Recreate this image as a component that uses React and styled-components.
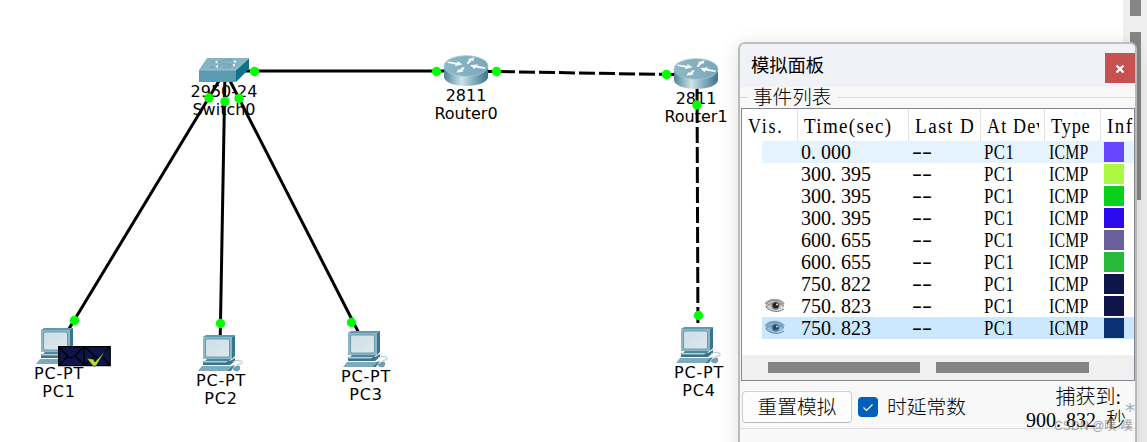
import React from "react";
import styled, { createGlobalStyle, css } from "styled-components";

const GlobalStyle = createGlobalStyle`
  body {
    margin: 0;
    background: #fff;
    overflow: hidden;
  }
  * {
    box-sizing: border-box;
  }
`;

const songti = `"Liberation Serif", "Noto Sans CJK SC", serif`;

const Workspace = styled.main`
  position: relative;
  display: flex;
  justify-content: flex-end;
  width: 1147px;
  height: 442px;
  overflow: hidden;
  background: #fff;
`;

const Track = styled.div`
  display: flex;
  flex-direction: column;
  align-items: center;
  gap: 16px;
  width: 24px;
  background: #efefef;
`;

const Thumb = styled.div`
  width: 11px;
  height: ${(p) => p.$size}px;
  background: #858585;
`;

const Links = styled.svg`
  position: absolute;
  inset: 0;
`;

// devices are placed freely on the topology canvas
const Node = styled.div`
  position: absolute;
  left: ${(p) => p.$x}px;
  top: ${(p) => p.$y}px;
  width: 90px;
  display: flex;
  flex-direction: column;
  align-items: center;
`;

const Label = styled.span`
  font: 16px/18px "DejaVu Sans", sans-serif;
  letter-spacing: ${(p) => p.$track || 0}px;
  color: #000;
  white-space: nowrap;
  text-align: center;
`;

const Packets = styled.svg`
  position: absolute;
  left: 58px;
  top: 345px;
`;

const Panel = styled.section`
  position: absolute;
  left: 738px;
  top: 42px;
  width: 399px;
  height: 420px;
  border: 2px solid #b9babc;
  border-top-color: #c0c0c1;
  border-radius: 7px 7px 0 0;
  background: #f8f8f8;
  box-shadow: 0 3px 20px rgba(0, 0, 0, 0.13);
`;

const TitleBar = styled.header`
  display: flex;
  justify-content: space-between;
  height: 43px;
  padding: 9px 0 0 11px;
  border-radius: 5px 5px 0 0;
  background: #f0f2f8;
`;

const Title = styled.h1`
  margin: -2px 0 0;
  font: 400 18.3px/26px "Noto Sans CJK SC", sans-serif;
  color: #000;
`;

const CloseButton = styled.button`
  display: flex;
  align-items: center;
  justify-content: center;
  width: 30px;
  height: 30px;
  padding: 1px 0 0;
  border: 0;
  background: #c75050;
`;

const Legend = styled.div`
  display: flex;
  align-items: center;
  height: 21px;
  font: 300 19.6px/21px ${songti};
  color: #000;

  &::before,
  &::after {
    content: "";
    height: 1px;
    background: #dcdcdc;
  }
  &::before {
    width: 8px;
    margin-right: 5px;
  }
  &::after {
    flex: 1;
    margin-left: 6px;
  }
`;

const EventTable = styled.div`
  width: 394px;
  height: 273px;
  margin-left: 1px;
  border: 1px solid #828790;
  background: #fff;
  overflow: hidden;
`;

const columns = css`
  display: grid;
  grid-template-columns: 56px 111px 72px 64px 56px 33px;
`;

const HeadRow = styled.div`
  ${columns}
  height: 32px;
`;

const HeadCell = styled.div`
  padding: 5px 5px 0 6px;
  border-right: 1px solid #e2e2e2;
  &:last-child {
    border-right: 0;
    padding-right: 0;
  }
`;

const Clip = styled.div`
  overflow: hidden;
  height: 25px;
`;

const Mono = styled.span`
  display: inline-block;
  font: 20px/24px ${songti};
  letter-spacing: ${(p) => p.$track || 0}px;
  transform: scaleX(${(p) => p.$squeeze || 1});
  transform-origin: left center;
  white-space: pre;
  color: #000;
`;

const Point = styled.span`
  letter-spacing: 5px;
`;

const Dashes = styled(Mono)`
  margin-top: -3px;
`;

const Row = styled.div`
  ${columns}
  height: 22px;
  background: linear-gradient(${(p) => p.$bg}, ${(p) => p.$bg}) 20px 0 no-repeat;
`;

const Cell = styled.div`
  height: 22px;
  padding-left: ${(p) => p.$pad || 3}px;
  display: flex;
  align-items: center;
`;

const EyeCell = styled(Cell)`
  padding-left: 22px;
`;

const Swatch = styled.div`
  width: 20px;
  height: 20px;
  background: ${(p) => p.$color};
`;

const HScroll = styled.div`
  display: flex;
  gap: 16px;
  height: 25px;
  margin-top: 16px;
  padding: 7px 0 0 26px;
  background: #f0f0f0;
`;

const HThumb = styled.div`
  width: ${(p) => p.$w}px;
  height: 11px;
  background: #858585;
`;

const Controls = styled.div`
  display: flex;
  align-items: flex-start;
  height: 48px;
  border-bottom: 1px solid #dcdcdc;
  padding: 10px 9px 0 2px;
`;

const ResetButton = styled.button`
  width: 110px;
  height: 32px;
  padding: 0;
  border: 1px solid #cfcfcf;
  border-bottom-color: #bcbcbc;
  border-radius: 4px;
  background: #fdfdfd;
  font: 300 19.8px/28px ${songti};
  color: #000;
`;

const Check = styled.div`
  display: flex;
  align-items: center;
  justify-content: center;
  width: 20px;
  height: 20px;
  margin: 6px 9px 0 6px;
  border-radius: 4px;
  background: #005fb8;
`;

const CheckLabel = styled.span`
  font: 300 19.8px/32px ${songti};
  color: #000;
`;

const Captured = styled.div`
  flex: 1;
  margin-top: -5px;
  font: 300 20px/23px ${songti};
  text-align: right;
  color: #000;
  white-space: pre;
`;

const Star = styled.span`
  position: absolute;
  left: 1125px;
  top: 398px;
  font: 20px/24px "DejaVu Sans", sans-serif;
  color: #a5aab2;
`;

const Watermark = styled.span`
  position: absolute;
  left: 1054px;
  top: 417px;
  font: 12.2px/18px "Liberation Sans", "Noto Sans CJK SC", sans-serif;
  color: rgba(110, 110, 110, 0.65);
  white-space: nowrap;
`;

const Defs = () => (
  <svg width="0" height="0" style={{ position: "absolute" }}>
    <defs>
      <linearGradient id="side" x1="0" x2="1" y1="0" y2="0">
        <stop offset="0" stopColor="#4f8499" />
        <stop offset="0.4" stopColor="#cfe3ea" />
        <stop offset="0.65" stopColor="#8ab3c2" />
        <stop offset="1" stopColor="#3d7389" />
      </linearGradient>
      <linearGradient id="top" x1="0" x2="1" y1="0" y2="0">
        <stop offset="0" stopColor="#8fb9c8" />
        <stop offset="1" stopColor="#79a7b9" />
      </linearGradient>
      <linearGradient id="screen" x1="0" x2="1" y1="0" y2="1">
        <stop offset="0" stopColor="#cddfe6" />
        <stop offset="1" stopColor="#dde8ed" />
      </linearGradient>
    </defs>
  </svg>
);

const RouterIcon = () => (
  <svg width="46" height="32" viewBox="0 0 46 32">
    <path d="M1 11v11c0 5 10 9 22 9s22-4 22-9V11z" fill="url(#side)" />
    <ellipse cx="23" cy="11" rx="22" ry="10.3" fill="url(#top)" stroke="#a7c8d4" strokeWidth="0.8" />
    <g fill="#f7fcfe" stroke="#5e8fa2" strokeWidth="0.3">
      <path d="M4.5 6.2l9.5 1.4.6-1.8 5.4 3.8-8.5 2 .8-1.9-8.8-1.6z" />
      <path d="M42 14.3l-9.5-1.5-.9 1.6-5-4.4 9-.9-1.2 1.5 8.6 1.7z" />
      <path d="M23.2 8.7l2.6-4-1.8-.6 8-2-1.7 4.3-1.5-.7-3.2 3.6z" />
      <path d="M22 12.3l-2.3 3.7 1.8.7-8.5 1.3 2.2-4.1 1.6.7 3-2.8z" />
    </g>
  </svg>
);

const SwitchIcon = () => (
  <svg width="52" height="26" viewBox="0 0 52 26">
    <path d="M1 13L9 1h42L38 13z" fill="#86b4c4" />
    <path d="M1 13h37v12H1z" fill="#5b9bb1" />
    <path d="M38 13L51 1v11L38 25z" fill="#0e7289" />
    <path d="M1 13h37L51 1" fill="none" stroke="#a5c9d5" strokeWidth="0.8" />
    <path
      d="M14 5h9l3-2h8M30 8h8M11 10h9l4-3h8M25 10h8"
      fill="none"
      stroke="#6a9fb3"
      strokeWidth="1"
    />
    <path
      d="M16.5 5l3-1.5v3zM35 4.500l3-1.500v3zM17 9.500l3-1.500v3zM34 8l3-1.500v3z"
      fill="#f3fafc"
    />
  </svg>
);

const PcIcon = () => (
  <svg width="46" height="38" viewBox="0 0 46 38">
    <path d="M5 3L8 1h29l-3 2z" fill="#5e9bb0" />
    <path d="M34 3l3-2v21l-3 3z" fill="#33788f" />
    <rect x="5" y="3" width="29" height="22" fill="#8db7c6" />
    <rect x="7.5" y="5" width="24" height="18" rx="2" fill="url(#screen)" stroke="#578ea3" strokeWidth="0.8" />
    <path d="M9 25h24l-3 4H5z" fill="#4e879d" />
    <path d="M5 27h27l5-3v3l-5 4H5z" fill="#38748b" />
    <path d="M6 27h24l-2 1.5H5z" fill="#b0ced8" />
    <path d="M4 32h30l-5 5H0z" fill="#7dabbc" />
    <path d="M34 32l3-1-4 6h-4z" fill="#427e94" />
    <path d="M35 28c5-3 10-1 9 1s-5 0-4 3" fill="none" stroke="#b9d0d8" strokeWidth="1.2" />
    <path d="M38 32c3-1 5 0 4 3s-4 2.5-6 1.5-1-2.5 2-4.5z" fill="#6b9fb2" />
  </svg>
);

const EyeIcon = ({ blue }) => {
  const dark = blue ? "#24506f" : "#222";
  const mid = blue ? "#5e8cab" : "#777";
  return (
    <svg width="22" height="16" viewBox="0 0 22 16">
      <path d="M1 8C4 2 8 1 12 2s7 3 8 7c-4 5-14 6-19-1z" fill={blue ? "#94bdd8" : "#cfcfcf"} />
      <path d="M1.5 6C6 1 14 0 20 6" fill="none" stroke={mid} strokeWidth="2.4" opacity="0.7" />
      <path d="M2 9c3-4 12-6 18-1M2 9c5 5 12 6 18 2" fill="none" stroke={mid} strokeWidth="1" />
      <circle cx="11.5" cy="7.6" r="4.2" fill={mid} />
      <circle cx="11.7" cy="7.4" r="2.9" fill={dark} />
      <circle cx="13" cy="6.5" r="0.9" fill={blue ? "#c5e0f0" : "#fff"} />
    </svg>
  );
};

const nodes = [
  { x: 179, y: 57, icon: SwitchIcon, lines: ["2950-24", "Switch0"] },
  { x: 421, y: 55, icon: RouterIcon, lines: ["2811", "Router0"] },
  { x: 651, y: 58, icon: RouterIcon, lines: ["2811", "Router1"] },
  { x: 14, y: 327, icon: PcIcon, lines: ["PC-PT", "PC1"], track: 0.8 },
  { x: 176, y: 334, icon: PcIcon, lines: ["PC-PT", "PC2"], track: 0.8 },
  { x: 321, y: 330, icon: PcIcon, lines: ["PC-PT", "PC3"], track: 0.8 },
  { x: 654, y: 326, icon: PcIcon, lines: ["PC-PT", "PC4"], track: 0.8 },
];

const ports = [
  [254.5, 71.5], [436.5, 71.5], [496.5, 71.5], [666.5, 74.5],
  [697, 105], [698.5, 315.5], [209, 98], [225, 101.5], [239, 98.5],
  [74.5, 320.5], [220.5, 323.5], [351.5, 322.5],
];

const headers = [
  { text: "Vis.", squeeze: 0.9, track: 2 },
  { text: "Time(sec)", squeeze: 0.95, track: 1.4 },
  { text: "Last D", squeeze: 0.96, track: 1.5 },
  { text: "At Dev", squeeze: 0.9, track: 1.3 },
  { text: "Type", squeeze: 0.92, track: 0.8 },
  { text: "Inf", squeeze: 0.95, track: 1.6 },
];

const events = [
  { time: "0.000", color: "#6647ff", bg: "#e5f3ff" },
  { time: "300.395", color: "#adf941" },
  { time: "300.395", color: "#09d11b" },
  { time: "300.395", color: "#2c09eb" },
  { time: "600.655", color: "#6a609b" },
  { time: "600.655", color: "#2ab93b" },
  { time: "750.822", color: "#0f1449" },
  { time: "750.823", color: "#0f1449", eye: true },
  { time: "750.823", color: "#0a3273", eye: true, bg: "#cce8ff" },
];

const Seconds = ({ value }) => {
  const [whole, frac] = value.split(".");
  return (
    <Mono>
      {whole}
      <Point>.</Point>
      {frac}
    </Mono>
  );
};

const SimulationPanel = () => (
  <Panel>
    <TitleBar>
      <Title>模拟面板</Title>
      <CloseButton aria-label="Close">
        <svg width="10" height="8" viewBox="0 0 10 8">
          <path d="M1.5 .5l7 7M8.5 .5l-7 7" stroke="#fff" strokeWidth="2.2" />
        </svg>
      </CloseButton>
    </TitleBar>
    <Legend>事件列表</Legend>
    <EventTable>
      <HeadRow>
        {headers.map((h) => (
          <HeadCell key={h.text}>
            <Clip>
              <Mono $squeeze={h.squeeze} $track={h.track}>{h.text}</Mono>
            </Clip>
          </HeadCell>
        ))}
      </HeadRow>
      {events.map((e, i) => (
        <Row key={i} $bg={e.bg || "transparent"}>
          <EyeCell>{e.eye && <EyeIcon blue={!!e.bg} />}</EyeCell>
          <Cell>
            <Seconds value={e.time} />
          </Cell>
          <Cell>
            <Dashes $squeeze={1.5}>--</Dashes>
          </Cell>
          <Cell>
            <Mono $squeeze={0.84} $track={0.6}>PC1</Mono>
          </Cell>
          <Cell $pad={4}>
            <Mono $squeeze={0.79} $track={0.3}>ICMP</Mono>
          </Cell>
          <Cell>
            <Swatch $color={e.color} />
          </Cell>
        </Row>
      ))}
      <HScroll>
        <HThumb $w={152} />
        <HThumb $w={153} />
      </HScroll>
    </EventTable>
    <Controls>
      <ResetButton>重置模拟</ResetButton>
      <Check>
        <svg width="12" height="9" viewBox="0 0 12 9">
          <path d="M1.5 4.5l3 3 6-6" fill="none" stroke="#fff" strokeWidth="1.1" />
        </svg>
      </Check>
      <CheckLabel>时延常数</CheckLabel>
      <Captured>
        <div>
          捕获到<Point>:</Point>
        </div>
        <div>
          900<Point>.</Point>832<Point> </Point>秒
        </div>
      </Captured>
    </Controls>
  </Panel>
);

const App = () => (
  <>
    <GlobalStyle />
    <Defs />
    <Workspace>
      <Track>
        <Thumb $size={16} />
        <Thumb $size={168} />
      </Track>
      <Links width="740" height="442">
        <g stroke="#000" strokeWidth="3" fill="none">
          <path d="M225 71H467M225 71L58 347M225 71L220 350M225 71L366 347" />
          <path d="M467 71L697 75" strokeDasharray="16 4" strokeDashoffset="8" />
          <path d="M697 75L698 345" strokeDasharray="16 4" strokeDashoffset="8" />
        </g>
      </Links>
      {nodes.map(({ x, y, icon: Icon, lines, track }) => (
        <Node key={lines[1]} $x={x} $y={y}>
          <Icon />
          {lines.map((line) => (
            <Label key={line} $track={track}>{line}</Label>
          ))}
        </Node>
      ))}
      <Links width="740" height="442">
        {ports.map(([cx, cy]) => (
          <circle key={`${cx}-${cy}`} cx={cx} cy={cy} r="4.7" fill="#00ff00" />
        ))}
      </Links>
      <Packets width="53" height="22" viewBox="0 0 53 22">
        <g fill="#0f1449" stroke="#000" strokeWidth="1.3">
          <path d="M.7 1.7h25.5v19H.7zM26.2 1.7h26v19h-26z" />
          <path d="M1 2l9 9.5q3 2.5 6 0L26 2M1 20l9-9M26 20l-9-9M27 2l10 9.5q2 2 5 0L52 2M27 20l9-9M52 20l-9-9" fill="none" />
        </g>
        <path d="M29 13.5l6 .5 2 3L47 6l-9 15h-3z" fill="#b2dc35" stroke="#111" strokeWidth="0.5" />
      </Packets>
      <SimulationPanel />
      <Star>*</Star>
      <Watermark>CSDN @噗-噗</Watermark>
    </Workspace>
  </>
);

export default App;
